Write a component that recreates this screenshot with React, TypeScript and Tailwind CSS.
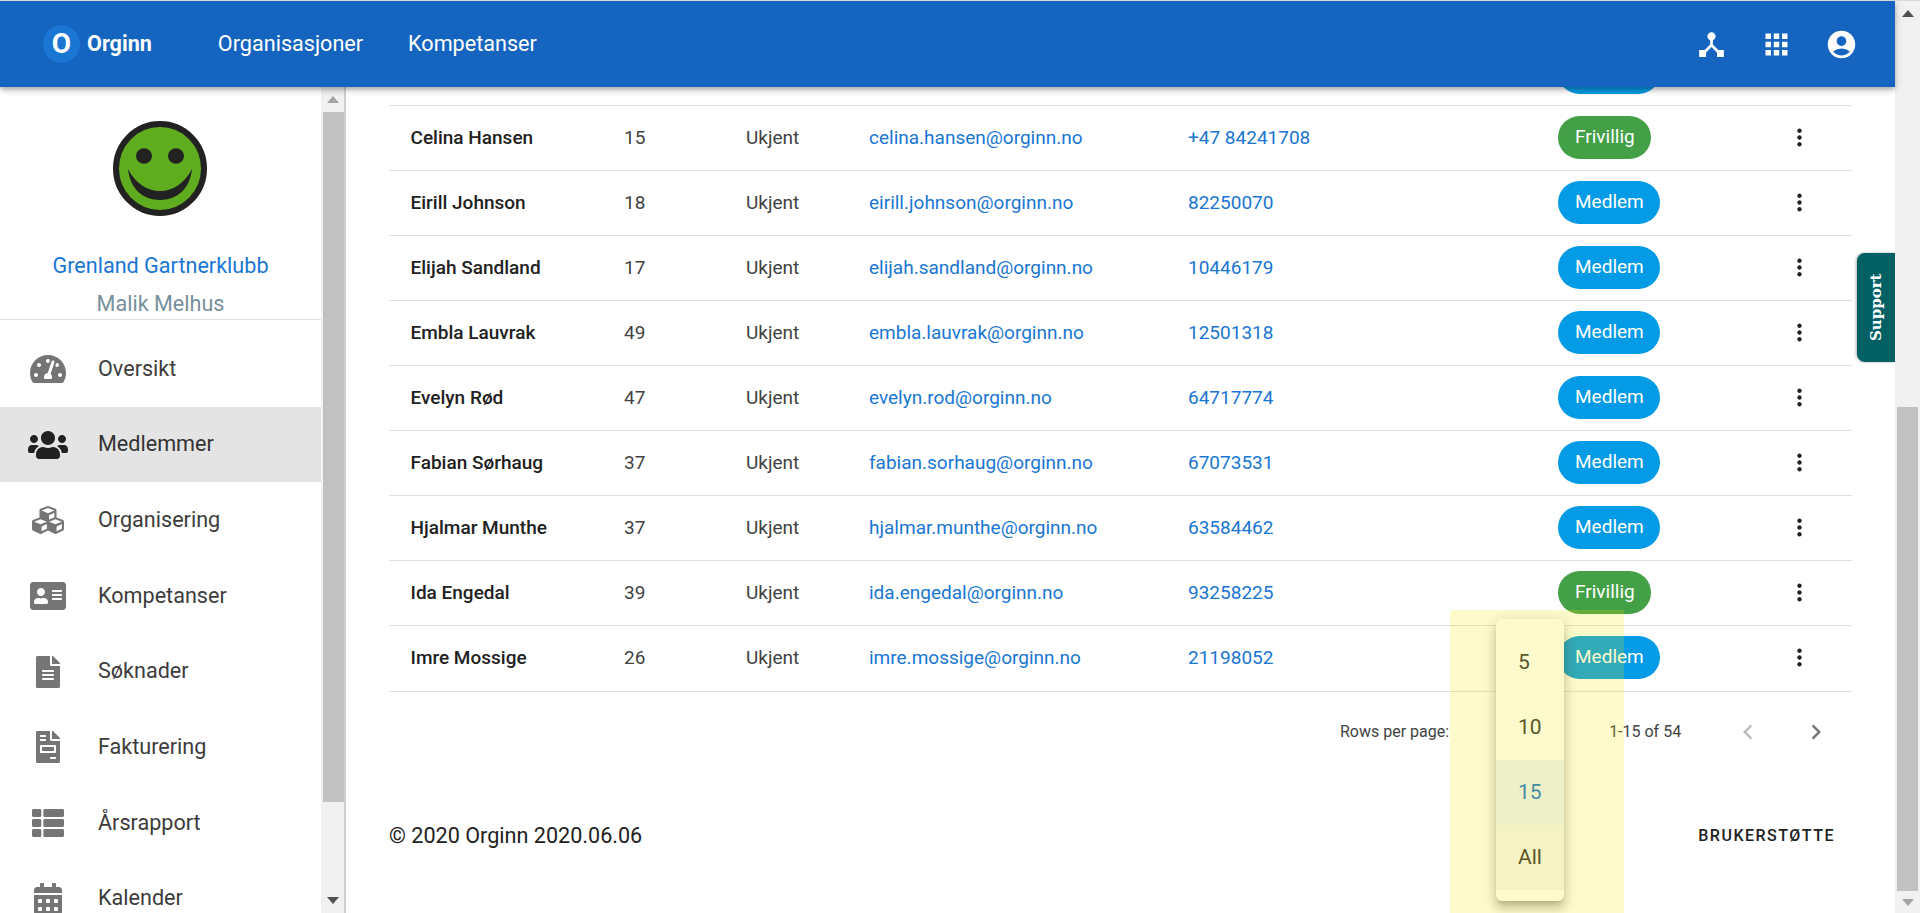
import React from "react";
import {
  FaTachometerAlt,
  FaUsers,
  FaCubes,
  FaAddressCard,
  FaFileAlt,
  FaFileInvoice,
  FaThList,
  FaCalendarAlt,
} from "react-icons/fa";
import {
  MdDeviceHub,
  MdApps,
  MdAccountCircle,
  MdMoreVert,
  MdChevronLeft,
  MdChevronRight,
} from "react-icons/md";

type Row = { name: string; age: string; email: string; phone: string; role: "Medlem" | "Frivillig" };

const rows: Row[] = [
  { name: "Celina Hansen", age: "15", email: "celina.hansen@orginn.no", phone: "+47 84241708", role: "Frivillig" },
  { name: "Eirill Johnson", age: "18", email: "eirill.johnson@orginn.no", phone: "82250070", role: "Medlem" },
  { name: "Elijah Sandland", age: "17", email: "elijah.sandland@orginn.no", phone: "10446179", role: "Medlem" },
  { name: "Embla Lauvrak", age: "49", email: "embla.lauvrak@orginn.no", phone: "12501318", role: "Medlem" },
  { name: "Evelyn Rød", age: "47", email: "evelyn.rod@orginn.no", phone: "64717774", role: "Medlem" },
  { name: "Fabian Sørhaug", age: "37", email: "fabian.sorhaug@orginn.no", phone: "67073531", role: "Medlem" },
  { name: "Hjalmar Munthe", age: "37", email: "hjalmar.munthe@orginn.no", phone: "63584462", role: "Medlem" },
  { name: "Ida Engedal", age: "39", email: "ida.engedal@orginn.no", phone: "93258225", role: "Frivillig" },
  { name: "Imre Mossige", age: "26", email: "imre.mossige@orginn.no", phone: "21198052", role: "Medlem" },
];

const nav = [
  { label: "Oversikt", Icon: FaTachometerAlt, size: "w-[36px]" },
  { label: "Medlemmer", Icon: FaUsers, size: "w-[40px]", active: true },
  { label: "Organisering", Icon: FaCubes, size: "w-[32px]" },
  { label: "Kompetanser", Icon: FaAddressCard, size: "w-[36px]" },
  { label: "Søknader", Icon: FaFileAlt, size: "w-[24px]" },
  { label: "Fakturering", Icon: FaFileInvoice, size: "w-[24px]" },
  { label: "Årsrapport", Icon: FaThList, size: "w-[32px]" },
  { label: "Kalender", Icon: FaCalendarAlt, size: "w-[28px]" },
];

function Chip({ role }: { role: Row["role"] }) {
  return (
    <span
      className={
        "inline-flex h-[43px] items-center rounded-[22px] pl-[17px] pr-[16px] text-[19px] text-white " +
        (role === "Medlem" ? "bg-[#039be5]" : "bg-[#43a047]")
      }
    >
      {role}
    </span>
  );
}

function Arrow({ up, color }: { up?: boolean; color: string }) {
  return (
    <svg width="12" height="7" viewBox="0 0 12 7">
      <polygon points={up ? "6,0 12,7 0,7" : "0,0 12,0 6,7"} fill={color} />
    </svg>
  );
}

function Smiley() {
  return (
    <svg width="94" height="95" viewBox="0 0 94 95">
      <ellipse cx="47" cy="47.5" rx="44" ry="44.5" fill="#5fad1e" stroke="#222222" strokeWidth="6" />
      <ellipse cx="31" cy="35" rx="8" ry="7.7" fill="#222222" />
      <ellipse cx="63" cy="35" rx="8" ry="7.7" fill="#222222" />
      <path d="M15 48 C17 68 30 79 47 79 C64 79 77 68 79 48 C72 62 60 70 47 70 C34 70 22 62 15 48 Z" fill="#222222" />
    </svg>
  );
}

export default function App() {
  return (
    <div className="relative flex h-[913px] w-full overflow-hidden border-t border-[#d8d8d8] bg-white font-[Roboto,sans-serif] text-[#212121]">
      <div className="flex w-[1895px] flex-col">
        <header className="relative z-10 flex h-[86px] shrink-0 items-center bg-[#1565c0] pl-[43px] pr-[37px] text-white shadow-[0_2px_4px_-1px_rgba(0,0,0,0.2),0_4px_5px_0_rgba(0,0,0,0.14),0_1px_10px_0_rgba(0,0,0,0.12)]">
          <div className="flex h-[38px] w-[37px] items-center justify-center rounded-full bg-[#1976d2] text-[28px] font-bold">
            O
          </div>
          <span className="ml-[7px] text-[21.6px] font-bold">Orginn</span>
          <nav className="ml-[66px] flex gap-[45px] text-[21.6px]">
            <span>Organisasjoner</span>
            <span>Kompetanser</span>
          </nav>
          <div className="ml-auto flex items-center gap-[32px]">
            <MdDeviceHub className="h-[33px] w-[33px]" />
            <MdApps className="h-[33px] w-[33px]" />
            <MdAccountCircle className="h-[33px] w-[33px]" />
          </div>
        </header>

        <div className="flex min-h-0 flex-1">
          <aside className="flex w-[346px] shrink-0 border-r-2 border-[#d0d0d0]">
            <div className="w-[321px] shrink-0 overflow-hidden">
              <div className="flex justify-center pr-[2px] pt-[34px]">
                <Smiley />
              </div>
              <div className="mt-[36px] text-center text-[21.6px] leading-[28px] text-[#1976d2]">Grenland Gartnerklubb</div>
              <div className="mt-[10px] border-b border-[#e0e0e0] pb-[1px] text-center text-[21.6px] leading-[28px] text-[#78909c]">
                Malik Melhus
              </div>
              <div className="pt-[11px]">
                {nav.map(({ label, Icon, size, active }) => (
                  <div
                    key={label}
                    className={"flex h-[75.7px] items-center text-[21.6px] " + (active ? "bg-[#e4e4e4] text-[#333333]" : "text-[#3c3c3c]")}
                  >
                    <span className="flex w-[98px] shrink-0 justify-center pr-[2px]">
                      <Icon className={"h-[32px] " + size + " " + (active ? "text-[#212121]" : "text-[#757575]")} />
                    </span>
                    {label}
                  </div>
                ))}
              </div>
            </div>
            <div className="flex flex-1 flex-col bg-[#f1f1f1]">
              <div className="flex h-[25px] shrink-0 items-center justify-center">
                <Arrow up color="#a3a3a3" />
              </div>
              <div className="ml-[2px] h-[690px] shrink-0 bg-[#c1c1c1]" />
              <div className="flex flex-1 items-end justify-center pb-[9px]">
                <Arrow color="#505050" />
              </div>
            </div>
          </aside>

          <main className="relative min-w-0 flex-1 overflow-hidden px-[43px]">
            <div className="mt-[-46px]">
              <div className="flex h-[65px] items-center border-b border-[#e0e0e0] pl-[1169px]">
                <div className="mb-[2px] h-[43px] w-[102px] rounded-[22px] bg-[#039be5]" />
              </div>
              {rows.map((r, i) => (
                <div
                  key={r.name}
                  className={
                    "grid grid-cols-[213px_122px_123px_319px_370px_228px_27px] items-center border-b border-[#e0e0e0] pl-[22px] text-[19px] " +
                    (i === rows.length - 1 ? "h-[66px]" : "h-[65px]")
                  }
                >
                  <span className="-ml-[0.5px] font-medium text-[#212121]">{r.name}</span>
                  <span className="text-[#424242]">{r.age}</span>
                  <span className="text-[#424242]">Ukjent</span>
                  <span className="text-[#1976d2]">{r.email}</span>
                  <span className="text-[#1976d2]">{r.phone}</span>
                  <span className="mb-[2px] flex">
                    <Chip role={r.role} />
                  </span>
                  <MdMoreVert className="mb-[2px] h-[27px] w-[27px] text-[#212121]" />
                </div>
              ))}
            </div>

            <div className="flex h-[80px] items-center text-[16px] text-[#424242]">
              <span className="ml-[951px]">Rows per page:</span>
              <span className="ml-[160px]">1-15 of 54</span>
              <MdChevronLeft className="ml-[52px] h-[30px] w-[30px] text-[#bdbdbd]" />
              <MdChevronRight className="ml-[38px] h-[30px] w-[30px] text-[#757575]" />
            </div>

            <div className="mt-[48px] flex items-center justify-between pr-[17px]">
              <span className="text-[21.6px] text-[#212121]">© 2020 Orginn 2020.06.06</span>
              <span className="text-[16px] font-medium tracking-[1.5px] text-[#212121]">BRUKERSTØTTE</span>
            </div>

            <div className="absolute right-0 top-[166px] flex h-[109px] w-[38px] items-center justify-center rounded-l-[8px] bg-[#006064] shadow-[-1px_0_3px_rgba(0,0,0,0.3)]">
              <span className="rotate-[-90deg] font-['DejaVu_Serif',serif] text-[15px] font-bold whitespace-nowrap text-white">
                Support
              </span>
            </div>
          </main>
        </div>
      </div>

      <div className="flex w-[25px] shrink-0 flex-col bg-[#f1f1f1]">
        <div className="flex h-[25px] shrink-0 items-center justify-center">
          <Arrow up color="#505050" />
        </div>
        <div className="mt-[381px] ml-[2px] mr-[2px] h-[484px] shrink-0 bg-[#c1c1c1]" />
        <div className="flex flex-1 items-center justify-center">
          <Arrow color="#a3a3a3" />
        </div>
      </div>

      <div className="absolute left-[1496px] top-[618px] z-20 w-[68px] rounded-[6px] bg-white py-[11px] text-[21px] text-[#333333] shadow-[0_5px_5px_-3px_rgba(0,0,0,0.2),0_8px_10px_1px_rgba(0,0,0,0.14),0_3px_14px_2px_rgba(0,0,0,0.12)]">
        <div className="flex h-[65px] items-center pl-[22px]">5</div>
        <div className="flex h-[65px] items-center pl-[22px]">10</div>
        <div className="flex h-[65px] items-center bg-[rgba(25,118,210,0.08)] pl-[22px] text-[#1976d2]">15</div>
        <div className="flex h-[65px] items-center bg-[rgba(0,0,0,0.04)] pl-[22px]">All</div>
      </div>
      <div className="pointer-events-none absolute bottom-0 left-[1450px] top-[609px] z-30 w-[174px] bg-[rgba(245,230,0,0.2)]" />
    </div>
  );
}
